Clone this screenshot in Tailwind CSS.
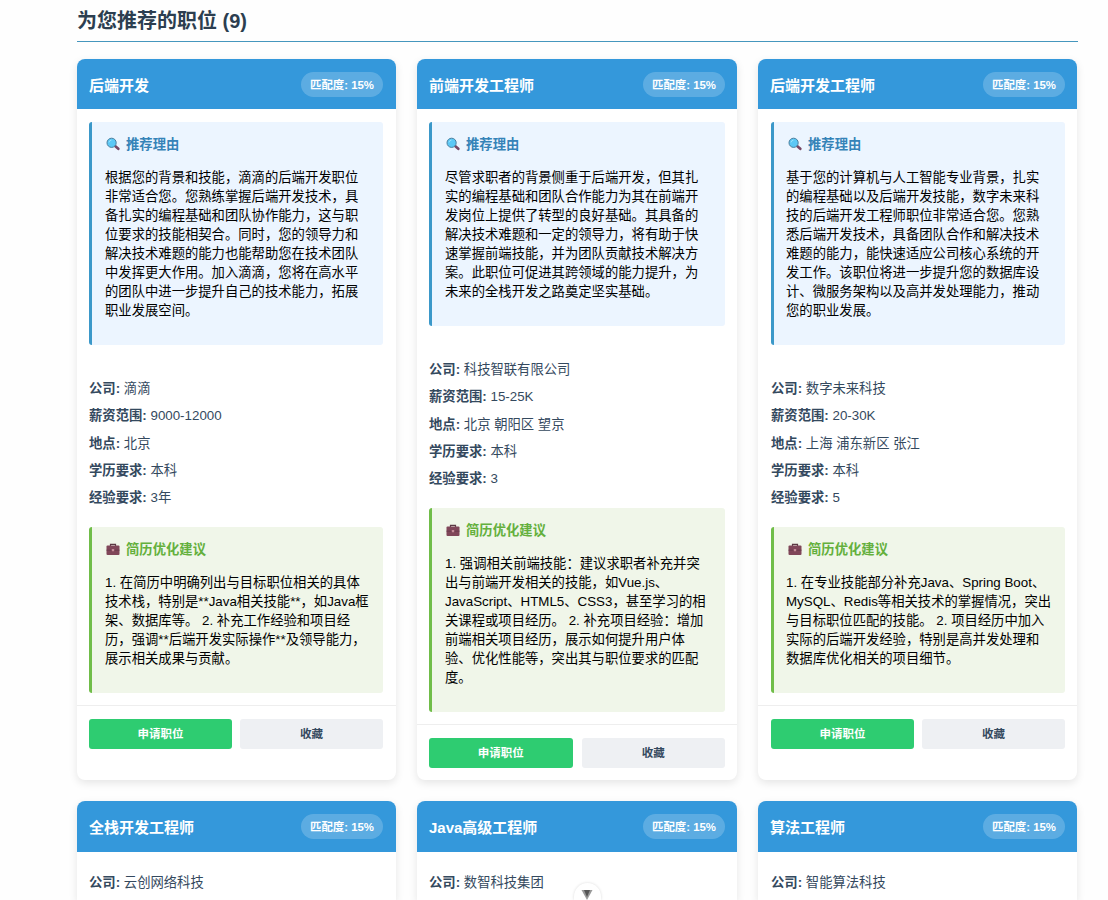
<!DOCTYPE html>
<html lang="zh-CN">
<head>
    <meta charset="UTF-8">
    <meta name="viewport" content="width=device-width, initial-scale=1.0">
    <title>职位推荐</title>
    <script src="https://cdn.jsdelivr.net/npm/@tailwindcss/browser@4"></script>
</head>
<body class="h-[900px] overflow-hidden bg-[#fefefe] font-['Liberation_Sans','Noto_Sans_CJK_SC',sans-serif] text-[13.33px] text-black">
    <svg class="hidden">
        <symbol id="search" viewBox="0 0 14 14">
            <path d="M9.4 9.2l2.9 2.6" stroke="#774765" stroke-width="2.6" stroke-linecap="round"/>
            <circle cx="5.6" cy="5.8" r="4.6" fill="#5cc8f6" stroke="#4b7f9e" stroke-width="1"/>
            <path d="M3 5.4a2.6 2.6 0 0 1 2.4-2.2" stroke="#9be2fb" fill="none"/>
        </symbol>
        <symbol id="briefcase" viewBox="0 0 14 14">
            <path d="M4.5 4V2.4h5V4" fill="none" stroke="#5b3944" stroke-width="1.2"/>
            <rect x=".5" y="3.6" width="13" height="9.4" rx="1" fill="#804659"/>
            <path d="M.5 8.2h13" stroke="#653849" stroke-width=".8"/>
            <rect x="5.8" y="7" width="2.4" height="2.2" rx=".4" fill="#c58b98"/>
        </symbol>
    </svg>

    <main class="ml-[77px] w-[1001px]">
        <h2 class="h-[42px] border-b border-[#4596bd] pt-[6px] text-[20px] leading-[30px] font-bold text-[#2c3e50]">为您推荐的职位 (9)</h2>

        <div class="mt-[17px] grid grid-cols-[319px_320px_319px] gap-[21px] whitespace-nowrap">
            <!-- 后端开发 -->
            <div class="flex h-[721px] flex-col overflow-hidden rounded-lg bg-white shadow-[0_3px_9px_rgba(0,0,0,0.1)]">
                <div class="flex h-[50px] shrink-0 items-center justify-between bg-[#3498db] px-3 pt-px text-white">
                    <h3 class="pt-[3px] text-[15px] font-bold">后端开发</h3>
                    <span class="mr-px flex h-[25px] w-[82px] items-center justify-center rounded-full bg-white/20 pt-[3px] text-[11.4px] font-bold">匹配度: 15%</span>
                </div>
                <div class="mx-3 mr-[13px] mt-[13px] h-[223px] rounded-[3px] border-l-3 border-[#3b98c9] bg-[#ecf5ff] pl-[13px] pt-[13px]">
                    <h4 class="flex h-5 items-center gap-1.5 pl-px font-bold text-[#3583b8]"><svg class="-mt-0.5 size-3.5"><use href="#search"/></svg>推荐理由</h4>
                    <p class="mt-[13px] leading-[19px]">根据您的背景和技能，滴滴的后端开发职位<br>非常适合您。您熟练掌握后端开发技术，具<br>备扎实的编程基础和团队协作能力，这与职<br>位要求的技能相契合。同时，您的领导力和<br>解决技术难题的能力也能帮助您在技术团队<br>中发挥更大作用。加入滴滴，您将在高水平<br>的团队中进一步提升自己的技术能力，拓展<br>职业发展空间。</p>
                </div>
                <div class="mt-[30px] px-3 leading-[27.3px] text-[#34495e]">
                    <p><strong>公司:</strong> 滴滴</p>
                    <p><strong>薪资范围:</strong> 9000-12000</p>
                    <p><strong>地点:</strong> 北京</p>
                    <p><strong>学历要求:</strong> 本科</p>
                    <p><strong>经验要求:</strong> 3年</p>
                </div>
                <div class="mx-3 mr-[13px] mt-[15.5px] h-[166px] rounded-[3px] border-l-3 border-[#70bd49] bg-[#f0f6e9] pl-[13px] pt-[13px]">
                    <h4 class="flex h-5 items-center gap-1.5 pl-px font-bold text-[#64b03d]"><svg class="-mt-0.5 size-3.5"><use href="#briefcase"/></svg>简历优化建议</h4>
                    <p class="mt-[13px] leading-[19px]">1. 在简历中明确列出与目标职位相关的具体<br>技术栈，特别是**Java相关技能**，如Java框<br>架、数据库等。 2. 补充工作经验和项目经<br>历，强调**后端开发实际操作**及领导能力，<br>展示相关成果与贡献。</p>
                </div>
                <div class="mt-3 flex gap-2 border-t border-[#eeeeee] px-3 pr-[13px] pt-[13px] text-[11.5px] font-bold">
                    <button class="h-[30px] flex-1 rounded-[3px] bg-[#2ecc71] pt-0.5 text-white">申请职位</button>
                    <button class="h-[30px] flex-1 rounded-[3px] bg-[#eef0f3] pt-0.5 text-[#34495e]">收藏</button>
                </div>
            </div>

            <!-- 前端开发工程师 -->
            <div class="flex h-[721px] flex-col overflow-hidden rounded-lg bg-white shadow-[0_3px_9px_rgba(0,0,0,0.1)]">
                <div class="flex h-[50px] shrink-0 items-center justify-between bg-[#3498db] px-3 pt-px text-white">
                    <h3 class="pt-[3px] text-[15px] font-bold">前端开发工程师</h3>
                    <span class="flex h-[25px] w-[82px] items-center justify-center rounded-full bg-white/20 pt-[3px] text-[11.4px] font-bold">匹配度: 15%</span>
                </div>
                <div class="mx-3 mt-[13px] h-[204px] rounded-[3px] border-l-3 border-[#3b98c9] bg-[#ecf5ff] pl-[13px] pt-[13px]">
                    <h4 class="flex h-5 items-center gap-1.5 pl-px font-bold text-[#3583b8]"><svg class="-mt-0.5 size-3.5"><use href="#search"/></svg>推荐理由</h4>
                    <p class="mt-[13px] leading-[19px]">尽管求职者的背景侧重于后端开发，但其扎<br>实的编程基础和团队合作能力为其在前端开<br>发岗位上提供了转型的良好基础。其具备的<br>解决技术难题和一定的领导力，将有助于快<br>速掌握前端技能，并为团队贡献技术解决方<br>案。此职位可促进其跨领域的能力提升，为<br>未来的全栈开发之路奠定坚实基础。</p>
                </div>
                <div class="mt-[30px] px-3 leading-[27.3px] text-[#34495e]">
                    <p><strong>公司:</strong> 科技智联有限公司</p>
                    <p><strong>薪资范围:</strong> 15-25K</p>
                    <p><strong>地点:</strong> 北京 朝阳区 望京</p>
                    <p><strong>学历要求:</strong> 本科</p>
                    <p><strong>经验要求:</strong> 3</p>
                </div>
                <div class="mx-3 mt-[15.5px] h-[204px] rounded-[3px] border-l-3 border-[#70bd49] bg-[#f0f6e9] pl-[13px] pt-[13px]">
                    <h4 class="flex h-5 items-center gap-1.5 pl-px font-bold text-[#64b03d]"><svg class="-mt-0.5 size-3.5"><use href="#briefcase"/></svg>简历优化建议</h4>
                    <p class="mt-[13px] leading-[19px]">1. 强调相关前端技能：建议求职者补充并突<br>出与前端开发相关的技能，如Vue.js、<br>JavaScript、HTML5、CSS3，甚至学习的相<br>关课程或项目经历。 2. 补充项目经验：增加<br>前端相关项目经历，展示如何提升用户体<br>验、优化性能等，突出其与职位要求的匹配<br>度。</p>
                </div>
                <div class="mt-3 flex gap-[9px] border-t border-[#eeeeee] px-3 pt-[13px] text-[11.5px] font-bold">
                    <button class="h-[30px] flex-1 rounded-[3px] bg-[#2ecc71] pt-0.5 text-white">申请职位</button>
                    <button class="h-[30px] flex-1 rounded-[3px] bg-[#eef0f3] pt-0.5 text-[#34495e]">收藏</button>
                </div>
            </div>

            <!-- 后端开发工程师 -->
            <div class="flex h-[721px] flex-col overflow-hidden rounded-lg bg-white shadow-[0_3px_9px_rgba(0,0,0,0.1)]">
                <div class="flex h-[50px] shrink-0 items-center justify-between bg-[#3498db] px-3 pt-px text-white">
                    <h3 class="pt-[3px] text-[15px] font-bold">后端开发工程师</h3>
                    <span class="flex h-[25px] w-[82px] items-center justify-center rounded-full bg-white/20 pt-[3px] text-[11.4px] font-bold">匹配度: 15%</span>
                </div>
                <div class="mx-3 ml-[13px] mt-[13px] h-[223px] rounded-[3px] border-l-3 border-[#3b98c9] bg-[#ecf5ff] pl-3 pt-[13px]">
                    <h4 class="flex h-5 items-center gap-1.5 pl-0.5 font-bold text-[#3583b8]"><svg class="-mt-0.5 size-3.5"><use href="#search"/></svg>推荐理由</h4>
                    <p class="mt-[13px] leading-[19px]">基于您的计算机与人工智能专业背景，扎实<br>的编程基础以及后端开发技能，数字未来科<br>技的后端开发工程师职位非常适合您。您熟<br>悉后端开发技术，具备团队合作和解决技术<br>难题的能力，能快速适应公司核心系统的开<br>发工作。该职位将进一步提升您的数据库设<br>计、微服务架构以及高并发处理能力，推动<br>您的职业发展。</p>
                </div>
                <div class="mt-[30px] px-[13px] leading-[27.3px] text-[#34495e]">
                    <p><strong>公司:</strong> 数字未来科技</p>
                    <p><strong>薪资范围:</strong> 20-30K</p>
                    <p><strong>地点:</strong> 上海 浦东新区 张江</p>
                    <p><strong>学历要求:</strong> 本科</p>
                    <p><strong>经验要求:</strong> 5</p>
                </div>
                <div class="mx-3 ml-[13px] mt-[15.5px] h-[166px] rounded-[3px] border-l-3 border-[#70bd49] bg-[#f0f6e9] pl-3 pt-[13px]">
                    <h4 class="flex h-5 items-center gap-1.5 pl-0.5 font-bold text-[#64b03d]"><svg class="-mt-0.5 size-3.5"><use href="#briefcase"/></svg>简历优化建议</h4>
                    <p class="mt-[13px] leading-[19px]">1. 在专业技能部分补充Java、Spring Boot、<br>MySQL、Redis等相关技术的掌握情况，突出<br>与目标职位匹配的技能。 2. 项目经历中加入<br>实际的后端开发经验，特别是高并发处理和<br>数据库优化相关的项目细节。</p>
                </div>
                <div class="mt-3 flex gap-2 border-t border-[#eeeeee] px-3 pt-[13px] pl-[13px] text-[11.5px] font-bold">
                    <button class="h-[30px] flex-1 rounded-[3px] bg-[#2ecc71] pt-0.5 text-white">申请职位</button>
                    <button class="h-[30px] flex-1 rounded-[3px] bg-[#eef0f3] pt-0.5 text-[#34495e]">收藏</button>
                </div>
            </div>

            <!-- second row -->
            <div class="h-[99px] overflow-hidden rounded-t-lg bg-white shadow-[0_3px_9px_rgba(0,0,0,0.1)]">
                <div class="flex h-[51px] items-center justify-between bg-[#3498db] px-3 text-white">
                    <h3 class="pt-1 text-[15px] font-bold">全栈开发工程师</h3>
                    <span class="mr-px flex h-[25px] w-[82px] items-center justify-center rounded-full bg-white/20 pt-[3px] text-[11.4px] font-bold">匹配度: 15%</span>
                </div>
                <p class="mt-[17px] px-3 leading-[27.3px] text-[#34495e]"><strong>公司:</strong> 云创网络科技</p>
            </div>
            <div class="h-[99px] overflow-hidden rounded-t-lg bg-white shadow-[0_3px_9px_rgba(0,0,0,0.1)]">
                <div class="flex h-[51px] items-center justify-between bg-[#3498db] px-3 text-white">
                    <h3 class="pt-1 text-[15px] font-bold">Java高级工程师</h3>
                    <span class="flex h-[25px] w-[82px] items-center justify-center rounded-full bg-white/20 pt-[3px] text-[11.4px] font-bold">匹配度: 15%</span>
                </div>
                <p class="mt-[17px] px-3 leading-[27.3px] text-[#34495e]"><strong>公司:</strong> 数智科技集团</p>
            </div>
            <div class="h-[99px] overflow-hidden rounded-t-lg bg-white shadow-[0_3px_9px_rgba(0,0,0,0.1)]">
                <div class="flex h-[51px] items-center justify-between bg-[#3498db] px-3 text-white">
                    <h3 class="pt-1 text-[15px] font-bold">算法工程师</h3>
                    <span class="flex h-[25px] w-[82px] items-center justify-center rounded-full bg-white/20 pt-[3px] text-[11.4px] font-bold">匹配度: 15%</span>
                </div>
                <p class="mt-[17px] px-[13px] leading-[27.3px] text-[#34495e]"><strong>公司:</strong> 智能算法科技</p>
            </div>
        </div>
    </main>

    <!-- scroll down button -->
    <div class="fixed top-[883px] left-[574px] flex h-[17px] w-[27px] justify-center overflow-hidden rounded-t-full bg-white pt-[7px] shadow-[0_0_3px_rgba(0,0,0,0.15)]">
        <svg class="mr-px h-[10px] w-3" viewBox="0 0 12 10"><path d="M.5 0h11L6 10z" fill="#999"/><path d="M3 0h6L6 7z" fill="#555"/></svg>
    </div>
</body>
</html>
